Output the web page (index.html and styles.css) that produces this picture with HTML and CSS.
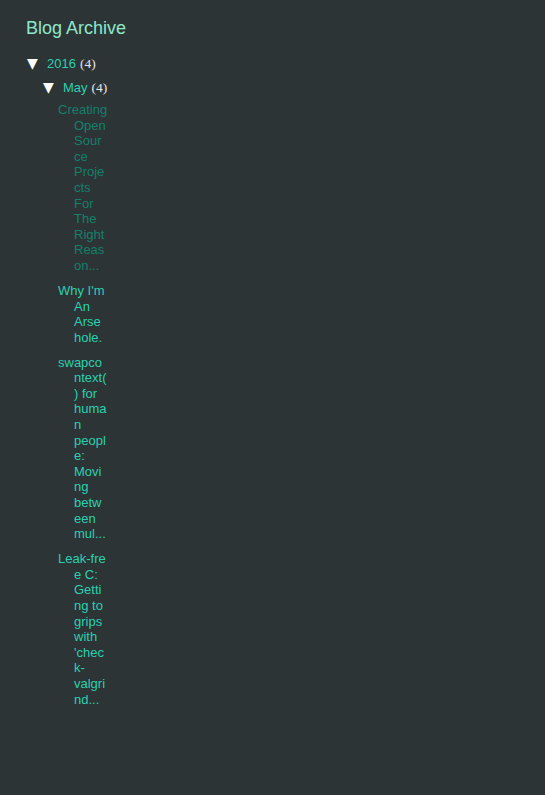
FILE: index.html
```html
<!DOCTYPE html>
<html lang="en">
<head>
    <meta charset="UTF-8">
    <title>Blog Archive</title>
    <link rel="stylesheet" href="styles.css">
</head>
<body>
    <div class="widget">
        <h2>Blog Archive</h2>
        <ul class="hierarchy">
            <li class="expanded">
                <div class="row">
                    <a class="toggle" href="#">▼</a>
                    <a class="count-link" href="#">2016</a>
                    <span class="count">(4)</span>
                </div>
                <ul class="hierarchy">
                    <li class="expanded">
                        <div class="row">
                            <a class="toggle" href="#">▼</a>
                            <a class="count-link" href="#">May</a>
                            <span class="count">(4)</span>
                        </div>
                        <ul class="posts">
                            <li><a class="visited" href="#">Creating Open Source Projects For The Right Reason...</a></li>
                            <li><a href="#">Why I'm An Arsehole.</a></li>
                            <li><a href="#">swapcontext() for human people: Moving between mul...</a></li>
                            <li><a href="#"><span class="chars">Leak-free</span> C: Getting to grips with 'check-valgrind...</a></li>
                        </ul>
                    </li>
                </ul>
            </li>
        </ul>
    </div>
</body>
</html>
```

FILE: styles.css
```css
body {
    margin: 0;
    padding: 0;
    background: #2d3436;
    font-family: "Liberation Sans", Arial, sans-serif;
    font-size: 13px;
    min-height: 795px;
}
.widget {
    padding: 16px 26px;
}
.widget h2 {
    margin: 0 0 15px;
    font-size: 18px;
    font-weight: normal;
    line-height: 24px;
    color: #8ce8c8;
}
ul {
    list-style: none;
    margin: 0;
    padding: 0;
}
a {
    text-decoration: none;
    color: #2ad1b0;
}
a.visited {
    color: #14806a;
}
.row {
    display: flex;
    align-items: baseline;
    height: 24px;
}
.toggle {
    width: 20px;
    padding-left: 1px;
    color: #fff;
    font-family: "DejaVu Sans", sans-serif;
    font-size: 14px;
}
.count {
    margin-left: 4px;
    color: #e6e6e6;
    font-family: "Liberation Serif", serif;
    font-size: 13.5px;
}
.hierarchy .hierarchy {
    padding-left: 16px;
}
.posts {
    margin-top: -1px;
    padding-left: 16px;
}
.posts li {
    width: 33.5px;
    padding-left: 16px;
    text-indent: -16px;
    margin-bottom: 9.4px;
    line-height: 15.6px;
    overflow-wrap: break-word;
}
.posts .chars {
    word-break: break-all;
}
```
